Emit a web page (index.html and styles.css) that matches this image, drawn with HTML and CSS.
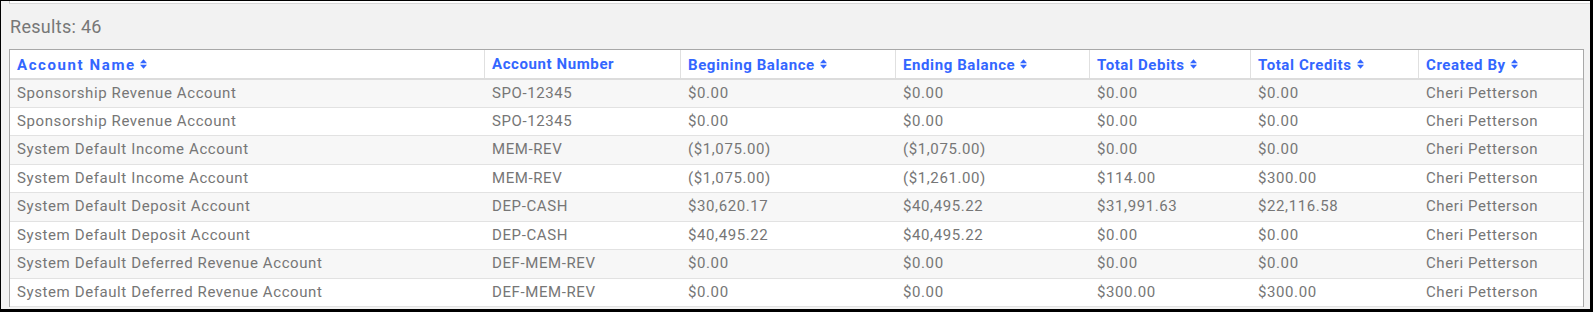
FILE: index.html
```html
<!DOCTYPE html>
<html>
<head>
<meta charset="utf-8">
<link rel="stylesheet" href="styles.css">
</head>
<body>
<div class="frame">
  <div class="stub"></div>
  <div class="results">Results: 46</div>
  <div class="grid">
    <div class="row head">
      <div class="cell wide">Account Name<svg class="sort" viewBox="0 0 7 10"><path d="M0 4.2L3.5 0.2L7 4.2Z M0 5.8L7 5.8L3.5 9.8Z"/></svg></div>
      <div class="cell nosort">Account Number</div>
      <div class="cell">Begining Balance<svg class="sort" viewBox="0 0 7 10"><path d="M0 4.2L3.5 0.2L7 4.2Z M0 5.8L7 5.8L3.5 9.8Z"/></svg></div>
      <div class="cell">Ending Balance<svg class="sort" viewBox="0 0 7 10"><path d="M0 4.2L3.5 0.2L7 4.2Z M0 5.8L7 5.8L3.5 9.8Z"/></svg></div>
      <div class="cell">Total Debits<svg class="sort" viewBox="0 0 7 10"><path d="M0 4.2L3.5 0.2L7 4.2Z M0 5.8L7 5.8L3.5 9.8Z"/></svg></div>
      <div class="cell">Total Credits<svg class="sort" viewBox="0 0 7 10"><path d="M0 4.2L3.5 0.2L7 4.2Z M0 5.8L7 5.8L3.5 9.8Z"/></svg></div>
      <div class="cell">Created By<svg class="sort" viewBox="0 0 7 10"><path d="M0 4.2L3.5 0.2L7 4.2Z M0 5.8L7 5.8L3.5 9.8Z"/></svg></div>
    </div>
    <div class="row">
      <div class="cell">Sponsorship Revenue Account</div><div class="cell">SPO-12345</div><div class="cell">$0.00</div><div class="cell">$0.00</div><div class="cell">$0.00</div><div class="cell">$0.00</div><div class="cell">Cheri Petterson</div>
    </div>
    <div class="row">
      <div class="cell">Sponsorship Revenue Account</div><div class="cell">SPO-12345</div><div class="cell">$0.00</div><div class="cell">$0.00</div><div class="cell">$0.00</div><div class="cell">$0.00</div><div class="cell">Cheri Petterson</div>
    </div>
    <div class="row">
      <div class="cell">System Default Income Account</div><div class="cell">MEM-REV</div><div class="cell">($1,075.00)</div><div class="cell">($1,075.00)</div><div class="cell">$0.00</div><div class="cell">$0.00</div><div class="cell">Cheri Petterson</div>
    </div>
    <div class="row">
      <div class="cell">System Default Income Account</div><div class="cell">MEM-REV</div><div class="cell">($1,075.00)</div><div class="cell">($1,261.00)</div><div class="cell">$114.00</div><div class="cell">$300.00</div><div class="cell">Cheri Petterson</div>
    </div>
    <div class="row">
      <div class="cell">System Default Deposit Account</div><div class="cell">DEP-CASH</div><div class="cell">$30,620.17</div><div class="cell">$40,495.22</div><div class="cell">$31,991.63</div><div class="cell">$22,116.58</div><div class="cell">Cheri Petterson</div>
    </div>
    <div class="row">
      <div class="cell">System Default Deposit Account</div><div class="cell">DEP-CASH</div><div class="cell">$40,495.22</div><div class="cell">$40,495.22</div><div class="cell">$0.00</div><div class="cell">$0.00</div><div class="cell">Cheri Petterson</div>
    </div>
    <div class="row">
      <div class="cell">System Default Deferred Revenue Account</div><div class="cell">DEF-MEM-REV</div><div class="cell">$0.00</div><div class="cell">$0.00</div><div class="cell">$0.00</div><div class="cell">$0.00</div><div class="cell">Cheri Petterson</div>
    </div>
    <div class="row">
      <div class="cell">System Default Deferred Revenue Account</div><div class="cell">DEF-MEM-REV</div><div class="cell">$0.00</div><div class="cell">$0.00</div><div class="cell">$300.00</div><div class="cell">$300.00</div><div class="cell">Cheri Petterson</div>
    </div>
  </div>
</div>
</body>
</html>
```
FILE: styles.css
```css
html, body {
  margin: 0;
  padding: 0;
  background: #000;
}
.frame {
  box-sizing: border-box;
  width: 1593px;
  height: 312px;
  border-top: 1px solid #000;
  border-left: 1px solid #000;
  border-right: 3px solid #000;
  border-bottom: 3px solid #000;
  background: #f2f2f2;
  overflow: hidden;
  font-family: Roboto, "Noto Sans", sans-serif;
}
.stub {
  margin-left: 8px;
  height: 2px;
  background: #fff;
  border-left: 1px solid #c8c8c8;
  border-bottom: 1px solid #d8d8d8;
}
.results {
  padding: 12px 0 0 9px;
  height: 21px;
  margin-bottom: 12px;
  font-size: 18px;
  line-height: 21px;
  letter-spacing: 0.3px;
  color: #777;
}
.grid {
  margin-left: 8px;
  width: 1575px;
  box-sizing: border-box;
  border: 1px solid #a8a8a8;
  border-bottom: none;
  background: #fff;
}
.row {
  display: grid;
  grid-template-columns: 474px 196px 215px 194px 161px 168px 1fr;
  height: 28.45px;
  box-sizing: border-box;
  border-bottom: 1px solid #e2e2e2;
  font-size: 15px;
  line-height: 18px;
  letter-spacing: 0.6px;
  color: #767676;
}
.row:nth-child(even) {
  background: #f7f7f7;
}
.row .cell {
  padding: 4px 0 0 7px;
  white-space: nowrap;
  overflow: hidden;
}
.row .cell + .cell {
  padding-left: 8px;
}
.head {
  height: 29.5px;
  border-bottom: 2px solid #dcdcdc;
  background: #fff;
  color: #3366ff;
  font-weight: 700;
}
.head .cell {
  padding-top: 6px;
  display: flex;
  align-items: flex-start;
  gap: 5px;
}
.head .cell + .cell {
  border-left: 1px solid #e0e0e0;
  padding-left: 7px;
}
.head .wide {
  letter-spacing: 1.6px;
  gap: 4px;
}
.head .nosort {
  padding-top: 5px;
}
.sort {
  width: 7px;
  height: 10px;
  margin-top: 3px;
  fill: #3366ff;
  flex: none;
}
```
